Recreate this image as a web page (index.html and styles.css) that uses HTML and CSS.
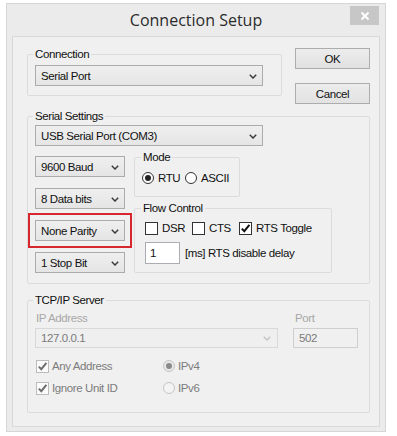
FILE: index.html
```html
<!DOCTYPE html>
<html>
<head>
<meta charset="utf-8">
<title>Connection Setup</title>
<link rel="stylesheet" href="styles.css">
</head>
<body>
<div class="window">
  <div class="titlebar">
    <div class="title">Connection Setup</div>
    <div class="close"><svg width="10" height="10" viewBox="0 0 10 10"><path d="M1.5 1.5 L8.5 8.5 M8.5 1.5 L1.5 8.5" stroke="#fff" stroke-width="2" fill="none"/></svg></div>
  </div>
  <div class="client">
    <div class="top-row">
      <div class="group g-conn">
        <div class="legend">Connection</div>
        <div class="combo w-conn"><span>Serial Port</span><svg class="chev" width="8" height="5" viewBox="0 0 8 5"><path d="M0.8 0.8 L4 4 L7.2 0.8" stroke="#3c3c3c" stroke-width="1.5" fill="none"/></svg></div>
      </div>
      <div class="buttons">
        <div class="btn">OK</div>
        <div class="btn">Cancel</div>
      </div>
    </div>

    <div class="group g-serial">
      <div class="legend">Serial Settings</div>
      <div class="combo w-usb"><span>USB Serial Port (COM3)</span><svg class="chev" width="8" height="5" viewBox="0 0 8 5"><path d="M0.8 0.8 L4 4 L7.2 0.8" stroke="#3c3c3c" stroke-width="1.5" fill="none"/></svg></div>
      <div class="serial-body">
        <div class="left-col">
          <div class="combo w-small"><span>9600 Baud</span><svg class="chev" width="8" height="5" viewBox="0 0 8 5"><path d="M0.8 0.8 L4 4 L7.2 0.8" stroke="#3c3c3c" stroke-width="1.5" fill="none"/></svg></div>
          <div class="combo w-small"><span>8 Data bits</span><svg class="chev" width="8" height="5" viewBox="0 0 8 5"><path d="M0.8 0.8 L4 4 L7.2 0.8" stroke="#3c3c3c" stroke-width="1.5" fill="none"/></svg></div>
          <div class="combo w-small highlight"><span>None Parity</span><svg class="chev" width="8" height="5" viewBox="0 0 8 5"><path d="M0.8 0.8 L4 4 L7.2 0.8" stroke="#3c3c3c" stroke-width="1.5" fill="none"/></svg></div>
          <div class="combo w-small"><span>1 Stop Bit</span><svg class="chev" width="8" height="5" viewBox="0 0 8 5"><path d="M0.8 0.8 L4 4 L7.2 0.8" stroke="#3c3c3c" stroke-width="1.5" fill="none"/></svg></div>
        </div>
        <div class="right-col">
          <div class="group g-mode">
            <div class="legend">Mode</div>
            <div class="opt-row">
              <div class="opt opt-rtu"><span class="radio checked"></span><span>RTU</span></div>
              <div class="opt"><span class="radio"></span><span>ASCII</span></div>
            </div>
          </div>
          <div class="group g-flow">
            <div class="legend">Flow Control</div>
            <div class="opt-row">
              <div class="opt opt-dsr"><span class="check"></span><span>DSR</span></div>
              <div class="opt opt-cts"><span class="check"></span><span>CTS</span></div>
              <div class="opt"><span class="check"><svg width="11" height="11" viewBox="0 0 11 11"><path d="M1.8 5.6 L4.3 8.2 L9.4 1.8" stroke="#111" stroke-width="2" fill="none"/></svg></span><span>RTS Toggle</span></div>
            </div>
            <div class="delay-row">
              <div class="num">1</div>
              <span class="delay-text">[ms] RTS disable delay</span>
            </div>
          </div>
        </div>
      </div>
    </div>

    <div class="group g-tcp">
      <div class="legend">TCP/IP Server</div>
      <div class="ip-row">
        <div class="ip-col">
          <div class="field-label">IP Address</div>
          <div class="combo disabled w-ip"><span>127.0.0.1</span><svg class="chev" width="8" height="5" viewBox="0 0 8 5"><path d="M0.8 0.8 L4 4 L7.2 0.8" stroke="#c2c2c2" stroke-width="1.3" fill="none"/></svg></div>
        </div>
        <div class="port-col">
          <div class="field-label port-label">Port</div>
          <div class="port-input">502</div>
        </div>
      </div>
      <div class="tcp-opts">
        <div class="opt dis"><span class="check dis-box"><svg width="11" height="11" viewBox="0 0 11 11"><path d="M1.8 5.6 L4.3 8.2 L9.4 1.8" stroke="#6e6e6e" stroke-width="2" fill="none"/></svg></span><span>Any Address</span></div>
        <div class="opt dis"><span class="radio dis-radio checked"></span><span>IPv4</span></div>
        <div class="opt dis"><span class="check dis-box"><svg width="11" height="11" viewBox="0 0 11 11"><path d="M1.8 5.6 L4.3 8.2 L9.4 1.8" stroke="#6e6e6e" stroke-width="2" fill="none"/></svg></span><span>Ignore Unit ID</span></div>
        <div class="opt dis"><span class="radio dis-radio"></span><span>IPv6</span></div>
      </div>
    </div>
  </div>
</div>
</body>
</html>
```

FILE: styles.css
```css
* { box-sizing: border-box; }
html, body { margin: 0; padding: 0; }
body {
  width: 397px;
  height: 436px;
  overflow: hidden;
  background: #ffffff;
  font-family: "Liberation Sans", Arial, sans-serif;
  font-size: 11.5px;
  letter-spacing: -0.4px;
  color: #111;
}
.window {
  margin: 3px 0 0 6px;
  width: 380px;
  height: 429px;
  border: 1px solid #d6d6d6;
  background: #ebebeb;
  display: flex;
  flex-direction: column;
}
.titlebar {
  flex: none;
  height: 32px;
  display: grid;
  grid-template-columns: 1fr auto 1fr;
  align-items: start;
}
.title {
  grid-column: 2;
  font-family: "Open Sans", "Noto Sans", sans-serif;
  font-size: 16px;
  letter-spacing: 0;
  line-height: 32px;
  color: #2b2b2b;
}
.close {
  grid-column: 3;
  justify-self: end;
  margin: 2px 6px 0 0;
  width: 29px;
  height: 19px;
  background: #c7c7c7;
  display: flex;
  align-items: center;
  justify-content: center;
}
.client {
  flex: 1;
  margin: 0 5px 4px 5px;
  border: 1px solid #d9d9d9;
  background: #f0f0f0;
  padding-left: 14px;
}
.top-row {
  display: flex;
  align-items: flex-start;
}
.group {
  border: 1px solid #dcdcdc;
  border-radius: 2px;
}
.legend {
  width: max-content;
  height: 13px;
  line-height: 13px;
  margin-top: -7px;
  padding: 0 2px;
  background: #f0f0f0;
}
.combo {
  height: 21px;
  border: 1px solid #acacac;
  background: linear-gradient(#efefef, #e5e5e5);
  display: flex;
  align-items: center;
  justify-content: space-between;
  padding: 0 5px 0 5px;
  white-space: nowrap;
}
.chev { flex: none; margin-top: 1px; }
.g-conn {
  margin-top: 17px;
  width: 255px;
  height: 42px;
  padding-left: 7px;
}
.g-conn .legend { margin-left: -2px; }
.w-conn { margin-top: 4px; width: 228px; }
.buttons {
  margin: 11px 0 0 13px;
  display: flex;
  flex-direction: column;
  gap: 14px;
}
.btn {
  width: 75px;
  height: 21px;
  border: 1px solid #adadad;
  background: linear-gradient(#ececec, #e2e2e2);
  display: flex;
  align-items: center;
  justify-content: center;
}
.g-serial {
  margin-top: 12px;
  width: 343px;
  height: 168px;
  padding-left: 7px;
}
.g-serial > .legend { margin-left: -2px; }
.w-usb { margin-top: 2px; width: 228px; }
.serial-body {
  display: flex;
  margin-top: 10px;
}
.left-col {
  display: flex;
  flex-direction: column;
  gap: 11px;
}
.w-small { width: 90px; }
.highlight {
  outline: 2px solid #d7262e;
  outline-offset: 5px;
}
.right-col { margin-left: 9px; }
.g-mode {
  margin-top: 1px;
  width: 106px;
  height: 40px;
  padding-left: 7px;
}
.g-mode .legend { margin-left: -1px; }
.g-mode .opt-row { margin-top: 7px; }
.opt-row {
  display: flex;
  align-items: center;
  height: 14px;
}
.opt {
  display: flex;
  align-items: center;
  gap: 4px;
  height: 14px;
  white-space: nowrap;
}
.opt-rtu { width: 43px; }
.radio {
  flex: none;
  width: 12px;
  height: 12px;
  border: 1px solid #333;
  border-radius: 50%;
  background: #fff;
  display: flex;
  align-items: center;
  justify-content: center;
}
.radio.checked::after {
  content: "";
  width: 6px;
  height: 6px;
  border-radius: 50%;
  background: #222;
}
.check {
  flex: none;
  width: 13px;
  height: 13px;
  border: 1px solid #333;
  background: #fff;
  display: flex;
  align-items: center;
  justify-content: center;
}
.g-flow {
  margin-top: 11px;
  width: 198px;
  height: 65px;
  padding-left: 10px;
}
.g-flow .legend { margin-left: -4px; }
.g-flow .opt-row { margin-top: 6px; }
.opt-dsr { width: 47px; }
.opt-cts { width: 47px; }
.delay-row {
  display: flex;
  align-items: center;
  margin-top: 7px;
}
.num {
  width: 35px;
  height: 22px;
  border: 1px solid #abadb3;
  background: #fff;
  padding-left: 4px;
  line-height: 20px;
}
.delay-text { margin-left: 5px; }
.g-tcp {
  margin-top: 16px;
  width: 343px;
  height: 113px;
  padding-left: 8px;
}
.g-tcp > .legend { margin-left: -3px; }
.ip-row {
  display: flex;
  margin: 5px 0 0 -1px;
}
.ip-col { width: 243px; }
.port-col { margin-left: 15px; width: 65px; }
.field-label {
  height: 13px;
  line-height: 13px;
  padding-left: 1px;
  color: #a8a8a8;
}
.port-label { padding-left: 2px; }
.combo.disabled {
  margin-top: 3px;
  height: 20px;
  border-color: #d9d9d9;
  background: #efefef;
  color: #7a7a7a;
  padding-right: 6px;
}
.port-input {
  margin-top: 3px;
  height: 20px;
  border: 1px solid #cfcfcf;
  background: #f0f0f0;
  color: #7a7a7a;
  padding-left: 5px;
  line-height: 18px;
}
.tcp-opts {
  display: grid;
  grid-template-columns: 127px auto;
  row-gap: 8px;
  margin-top: 11px;
}
.dis { color: #7c7c7c; gap: 3px; }
.dis-box {
  border-color: #bcbcbc;
  background: #fbfbfb;
}
.dis-radio {
  border-color: #c4c4c4;
  background: #f4f4f4;
}
.dis-radio.checked { background: #e8e8e8; }
.dis-radio.checked::after { background: #8a8a8a; }
```
